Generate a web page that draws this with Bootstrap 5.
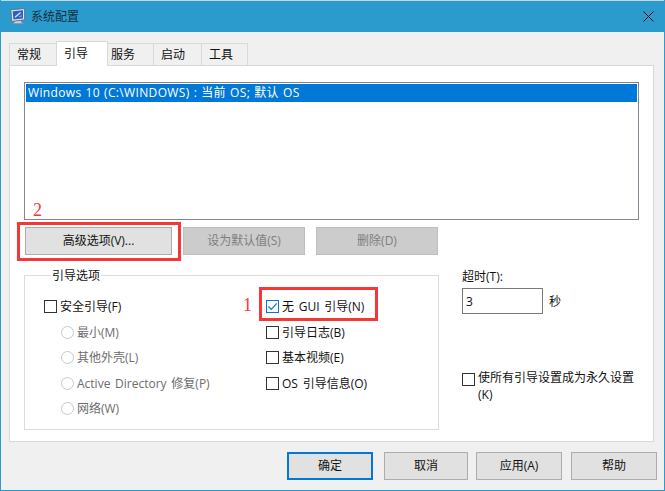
<!DOCTYPE html>
<html lang="zh">
<head>
<meta charset="utf-8">
<title>系统配置</title>
<link rel="stylesheet" href="https://cdn.jsdelivr.net/npm/bootstrap@5.3.0/dist/css/bootstrap.min.css">
<style>
html,body{margin:0;background:#f0f0f0}
body{font-family:"Open Sans","Noto Sans CJK SC",sans-serif;font-size:12px;line-height:15px;color:#111}
.win{position:relative;width:665px;height:491px;background:#f0f0f0;border:1px solid #2b9bce;border-top:0;overflow:hidden}
.titlebar{height:32px;background:#2b9bce;border-top:1px solid #c9d6dc;padding-left:9px;padding-right:10px;color:#10303f}
.titlebar .ttl{font-size:12px;margin-left:5px}
.winbody{padding:9px 7px 0 8px}
.tabsbar{height:24px;border:0;padding:0;gap:0;align-items:flex-end}
.tabsbar .nav-link{font-size:12px;color:#111;background:#f0f0f0;border:1px solid #d9d9d9;border-bottom:0;border-radius:0;margin:0 0 0 -1px;padding:0 0 0 7px;height:22px;line-height:21px;text-align:left;position:relative}
.tabsbar .nav-item:first-child .nav-link{margin-left:0}
.tabsbar .nav-link.active{height:25px;background:#fff;color:#111;margin-bottom:-1px;z-index:2;line-height:23px;border-color:#d9d9d9}
.tabw47{width:48px}.tabw52{width:52px}.tabw46{width:47px;padding-left:3px!important}.tabw49{width:49px}.tabw48{width:47px}
.panel{height:377px;margin-right:3px;background:#fff;border:1px solid #d9d9d9;padding:16px 14px 0 14px}
.bootlist{height:138px;width:615px;border:1px solid #828790;border-radius:0;padding:1px 1px 0 1px;background:#fff;display:block}
.bootlist .list-group-item{background:#0078d7;color:#fff;border:0;border-radius:0;padding:0 2px;height:18px;line-height:18px;font-size:12px;letter-spacing:.35px;word-spacing:.6px}
.wbtn{font-size:12px;line-height:1;border-radius:0;padding:0;color:#111;background:#e1e1e1;border:1px solid #adadad}
.wbtn:disabled{background:#ccc;border-color:#bfbfbf;color:#7e7e7e;opacity:1}
.btnrow{margin:7px 0 0 1px;height:28px}
.w147{width:147px}.w122{width:122px}
.ml11{margin-left:11px}
.lower{margin-top:13px;width:100%}
.grpbox{width:415px;height:162px;flex:none;border:1px solid #dcdcdc;margin:0;padding:0 0 0 19px;min-width:0}
.grpbox legend{float:none;width:auto;font-size:12px;line-height:15px;margin:0 0 0 7px;padding:0 1px;color:#111}
.grprows{margin-top:11px}
.lcol{width:222px}
.optrow{height:25.5px;display:flex;align-items:center;margin:0;padding:0;min-height:0;white-space:nowrap;word-spacing:1.6px}
.optrow.ind{padding-left:17px}
.form-check-input.wcb{float:none;margin:0 3px 0 0;width:13px;height:13px;border:1px solid #333;border-radius:0;background-color:#fff;box-shadow:none;flex:none}
.form-check-input.wcb:checked{background-color:#fff;border-color:#0078d7;background-size:11px 11px;background-image:url("data:image/svg+xml,%3Csvg xmlns='http://www.w3.org/2000/svg' viewBox='0 0 11 11'%3E%3Cpath d='M1.5 5.5l2.8 2.8 5.4-6' fill='none' stroke='%230078d7' stroke-width='1.2'/%3E%3C/svg%3E")}
.form-check-input.wrd{float:none;margin:0 3px 0 0;width:13px;height:13px;border:1px solid #c8c8c8;background-color:#fff;opacity:1;flex:none}
.form-check-input.wrd:disabled~.form-check-label{opacity:1;color:#6d6d6d}
.optrow .form-check-label{line-height:15px}
.rcol{margin-left:23px;width:177px;flex:none}
.tolabel{line-height:15px;margin:1px 0 4px}
.toinput{width:81px;height:26px;border:1px solid #7a7a7a;border-radius:0;padding:0 3px;font-size:12px;color:#111;min-height:0;box-shadow:none}
.tounit{margin-left:6px}
.permrow{margin-top:59px;align-items:flex-start;display:flex}
.permrow .form-check-label{line-height:17px;margin-top:-4px;width:158px;word-break:break-all}
.footbar{margin-top:10px;height:28px;justify-content:flex-end}
.fbtn{height:28px}
.fbtn.primary{border:2px solid #0078d7}
.w86{width:86px}.w84{width:84px}
.ml8{margin-left:8px}.ml9{margin-left:9px}
.redbox{position:absolute;border:3px solid #f43838;pointer-events:none}
.redbox.adv{left:16px;top:222px;width:164px;height:39px}
.redbox.gui{left:258px;top:287px;width:119px;height:34px}
.rednum{position:absolute;font-family:"Liberation Serif",serif;font-size:18px;line-height:18px;color:#f43838}
.rednum.n2{left:32px;top:201px}
.rednum.n1{left:242px;top:296px}
</style>
</head>
<body>
<div class="win">
  <div class="titlebar d-flex align-items-center">
    <svg width="16" height="17" viewBox="0 0 16 17" aria-hidden="true">
      <path d="M5 13h6l1 2.5H4z" fill="#c9cfd3"/>
      <path d="M3 15.5h10" stroke="#8f9aa2" stroke-width="1"/>
      <path d="M.8 1.8L14.6.6v11.2L1.8 13.4z" fill="#e3e8ee" stroke="#5d6b80" stroke-width=".9"/>
      <path d="M2.6 3.2L13 2.3v8.2L3.4 11.6z" fill="#2f5fc0"/>
      <path d="M5 9.2l5.6-4.6" stroke="#d5e3fa" stroke-width="1.3"/>
      <path d="M9 8.8l3-1" stroke="#7fb0ee" stroke-width="1"/>
    </svg>
    <span class="ttl">系统配置</span>
    <svg class="ms-auto" width="11" height="11" viewBox="0 0 11 11" aria-hidden="true"><path d="M.5.5l10 10M10.5.5l-10 10" stroke="#111" stroke-width="1"/></svg>
  </div>
  <div class="winbody">
    <ul class="nav nav-tabs tabsbar">
      <li class="nav-item"><a class="nav-link tabw47" href="#">常规</a></li>
      <li class="nav-item"><a class="nav-link active tabw52" href="#">引导</a></li>
      <li class="nav-item"><a class="nav-link tabw46" href="#">服务</a></li>
      <li class="nav-item"><a class="nav-link tabw49" href="#">启动</a></li>
      <li class="nav-item"><a class="nav-link tabw48" href="#">工具</a></li>
    </ul>
    <div class="panel">
      <div class="list-group bootlist">
        <div class="list-group-item">Windows 10 (C:\WINDOWS) : 当前 OS; 默认 OS</div>
      </div>
      <div class="d-flex btnrow">
        <button type="button" class="btn wbtn w147">高级选项(V)...</button>
        <button type="button" class="btn wbtn w122 ml11" disabled>设为默认值(S)</button>
        <button type="button" class="btn wbtn w122 ml11" disabled>删除(D)</button>
      </div>
      <div class="d-flex lower">
        <fieldset class="grpbox">
          <legend>引导选项</legend>
          <div class="d-flex grprows">
            <div class="lcol">
              <div class="form-check optrow"><input class="form-check-input wcb" type="checkbox" id="c1"><label class="form-check-label" for="c1">安全引导(F)</label></div>
              <div class="form-check optrow ind"><input class="form-check-input wrd" type="radio" name="r" id="r1" disabled><label class="form-check-label" for="r1">最小(M)</label></div>
              <div class="form-check optrow ind"><input class="form-check-input wrd" type="radio" name="r" id="r2" disabled><label class="form-check-label" for="r2">其他外壳(L)</label></div>
              <div class="form-check optrow ind"><input class="form-check-input wrd" type="radio" name="r" id="r3" disabled><label class="form-check-label" for="r3">Active Directory 修复(P)</label></div>
              <div class="form-check optrow ind"><input class="form-check-input wrd" type="radio" name="r" id="r4" disabled><label class="form-check-label" for="r4">网络(W)</label></div>
            </div>
            <div>
              <div class="form-check optrow"><input class="form-check-input wcb" type="checkbox" id="c2" checked><label class="form-check-label" for="c2">无 GUI 引导(N)</label></div>
              <div class="form-check optrow"><input class="form-check-input wcb" type="checkbox" id="c3"><label class="form-check-label" for="c3">引导日志(B)</label></div>
              <div class="form-check optrow"><input class="form-check-input wcb" type="checkbox" id="c4"><label class="form-check-label" for="c4">基本视频(E)</label></div>
              <div class="form-check optrow"><input class="form-check-input wcb" type="checkbox" id="c5"><label class="form-check-label" for="c5">OS 引导信息(O)</label></div>
            </div>
          </div>
        </fieldset>
        <div class="rcol">
          <div class="tolabel">超时(T):</div>
          <div class="d-flex align-items-center">
            <input class="form-control toinput" type="text" value="3" aria-label="超时">
            <span class="tounit">秒</span>
          </div>
          <div class="form-check permrow p-0">
            <input class="form-check-input wcb" type="checkbox" id="c6">
            <label class="form-check-label" for="c6">使所有引导设置成为永久设置(K)</label>
          </div>
        </div>
      </div>
    </div>
    <div class="d-flex footbar">
      <button type="button" class="btn wbtn fbtn primary w86">确定</button>
      <button type="button" class="btn wbtn fbtn w84 ml11">取消</button>
      <button type="button" class="btn wbtn fbtn w86 ml8">应用(A)</button>
      <button type="button" class="btn wbtn fbtn w86 ml9">帮助</button>
    </div>
  </div>
  <div class="redbox adv"></div>
  <div class="redbox gui"></div>
  <div class="rednum n2">2</div>
  <div class="rednum n1">1</div>
</div>
<script src="https://cdn.jsdelivr.net/npm/bootstrap@5.3.0/dist/js/bootstrap.bundle.min.js"></script>
</body>
</html>
